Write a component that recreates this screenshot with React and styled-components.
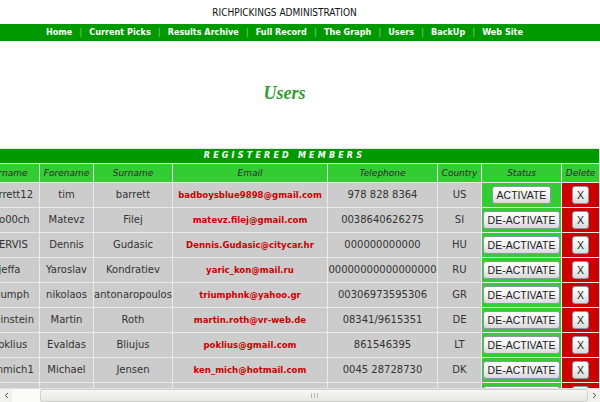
import React, { useLayoutEffect, useRef, useState } from "react";
import styled, { createGlobalStyle } from "styled-components";
import { ChevronLeft, ChevronRight } from "lucide-react";

const GlobalStyle = createGlobalStyle`
  html, body {
    margin: 0;
    padding: 0;
    background: #fff;
    overflow: hidden;
  }
`;

const Frame = styled.div`
  display: flex;
  flex-direction: column;
  height: 100vh;
`;

const Viewport = styled.div`
  flex: 1;
  min-height: 0;
  overflow: hidden;
`;

const Page = styled.div`
  width: max-content;
  min-width: 100%;
  font-family: "DejaVu Sans", Verdana, sans-serif;
`;

const TopTitle = styled.div`
  padding: 6px 0 5px;
  font: 10px/13px "DejaVu Sans Condensed", "DejaVu Sans", sans-serif;
  color: #111;
  text-align: center;
`;

const NavBar = styled.nav`
  height: 17px;
  background: #009900;
  display: flex;
  justify-content: center;
  align-items: center;
`;

const NavLink = styled.a`
  color: #fff;
  font: bold 9px/17px "DejaVu Sans Condensed", "DejaVu Sans", sans-serif;
  text-decoration: none;
`;

const NavSep = styled.span`
  color: #7fd07f;
  margin: 0 7px;
  font: 9px/17px "DejaVu Sans", sans-serif;
`;

const Heading = styled.h1`
  margin: 41px 0 44px;
  text-align: center;
  font: italic bold 18px/22px "Liberation Serif", "Times New Roman", serif;
  color: #339933;
`;

const Table = styled.table`
  width: 630px;
  table-layout: fixed;
  border-collapse: collapse;
  border: 1px solid #e6e6e6;
`;

const Col = styled.col`
  width: ${(p) => p.$w}px;
`;

const TitleCell = styled.th`
  height: 14px;
  padding: 0;
  background: #009900;
  color: #fff;
  font: italic bold 8px/14px "DejaVu Sans", sans-serif;
  letter-spacing: 3.2px;
  text-align: center;
  border: 1px solid #e6e6e6;
`;

const HeadCell = styled.th`
  height: 18px;
  padding: 0;
  background: #33cc33;
  color: #2b2b2b;
  font: italic normal 9px/18px "DejaVu Sans", sans-serif;
  text-align: center;
  border: 1px solid #e6e6e6;
`;

const tones = {
  grey: "#cccccc",
  green: "#33cc33",
  red: "#cc0000",
};

const Cell = styled.td`
  height: 24px;
  padding: 0 0 0 ${(p) => (p.$lead ? 10 : 0)}px;
  background: ${(p) => tones[p.$tone || "grey"]};
  color: #333;
  font: 10px/24px "DejaVu Sans", Verdana, sans-serif;
  text-align: center;
  white-space: nowrap;
  overflow: hidden;
  border: 1px solid #e9e9e9;
`;

const EmailLink = styled.a`
  color: #cc0000;
  font: bold 9.5px "DejaVu Sans Condensed", "DejaVu Sans", sans-serif;
  text-decoration: none;
`;

const ActionButton = styled.button`
  height: 18px;
  min-width: ${(p) => (p.$small ? 17 : 0)}px;
  padding: 0 4px;
  border: 1px solid #8996a8;
  border-radius: 3px;
  background: linear-gradient(#ffffff, #f3f3f3 45%, #d9d9d9);
  color: #1a1a1a;
  font: 10.5px/16px "Liberation Sans", Arial, sans-serif;
  vertical-align: middle;
  cursor: pointer;
`;

const ScrollBar = styled.div`
  height: 13px;
  display: flex;
  background: #f7f7f5;
  border-top: 1px solid #e2e2e2;
`;

const ArrowButton = styled.div`
  width: 12px;
  display: flex;
  align-items: center;
  justify-content: center;
  background: #f1f1ee;
  color: #333;
`;

const Track = styled.div`
  flex: 1;
  display: flex;
  background: #fbfbfa;
`;

const Thumb = styled.div`
  box-sizing: border-box;
  display: flex;
  align-items: center;
  justify-content: center;
  gap: 2px;
  background: linear-gradient(#f7f7f6, #e6e6e3);
  border: 1px solid #cfcfcc;
  border-radius: 2px;
`;

const Grip = styled.span`
  width: 1px;
  height: 5px;
  background: #b8b8b4;
`;

const columns = [
  ["Username", 70],
  ["Forename", 54],
  ["Surname", 79],
  ["Email", 155],
  ["Telephone", 110],
  ["Country", 44],
  ["Status", 80],
  ["Delete", 38],
];

const members = [
  { user: "barrett12", fore: "tim", sur: "barrett", email: "badboysblue9898@gmail.com", tel: "978 828 8364", country: "US", active: false },
  { user: "mo00ch", fore: "Matevz", sur: "Filej", email: "matevz.filej@gmail.com", tel: "0038640626275", country: "SI", active: true },
  { user: "DERVIS", fore: "Dennis", sur: "Gudasic", email: "Dennis.Gudasic@citycar.hr", tel: "000000000000", country: "HU", active: true },
  { user: "jeffa", fore: "Yaroslav", sur: "Kondratiev", email: "yaric_kon@mail.ru", tel: "00000000000000000", country: "RU", active: true },
  { user: "triumph", fore: "nikolaos", sur: "antonaropoulos", email: "triumphnk@yahoo.gr", tel: "00306973595306", country: "GR", active: true },
  { user: "Weinstein", fore: "Martin", sur: "Roth", email: "martin.roth@vr-web.de", tel: "08341/9615351", country: "DE", active: true },
  { user: "poklius", fore: "Evaldas", sur: "Bliujus", email: "poklius@gmail.com", tel: "861546395", country: "LT", active: true },
  { user: "kenmich1", fore: "Michael", sur: "Jensen", email: "ken_mich@hotmail.com", tel: "0045 28728730", country: "DK", active: true },
  { user: "willis77", fore: "Bill", sur: "Willis", email: "billwillis@hotmail.co.uk", tel: "07711 456123", country: "UK", active: true },
  { user: "sanchez", fore: "Pablo", sur: "Sanchez", email: "psanchez@telefonica.es", tel: "0034 915558877", country: "ES", active: true },
];

const navItems = ["Home", "Current Picks", "Results Archive", "Full Record", "The Graph", "Users", "BackUp", "Web Site"];

function App() {
  const viewRef = useRef(null);
  const [bar, setBar] = useState({ left: 0, size: 1 });

  useLayoutEffect(() => {
    const el = viewRef.current;
    if (!el) return;
    el.scrollLeft = el.scrollWidth;
    const total = el.scrollWidth || 1;
    setBar({ left: el.scrollLeft / total, size: el.clientWidth / total });
  }, []);

  return (
    <Frame>
      <GlobalStyle />
      <Viewport ref={viewRef}>
        <Page>
          <TopTitle>RICHPICKINGS ADMINISTRATION</TopTitle>
          <NavBar>
            {navItems.map((item, i) => (
              <React.Fragment key={item}>
                {i > 0 && <NavSep>|</NavSep>}
                <NavLink href="#">{item}</NavLink>
              </React.Fragment>
            ))}
          </NavBar>
          <Heading>Users</Heading>
          <Table>
            <colgroup>
              {columns.map(([name, w]) => (
                <Col key={name} $w={w} />
              ))}
            </colgroup>
            <thead>
              <tr>
                <TitleCell colSpan={8}>REGISTERED MEMBERS</TitleCell>
              </tr>
              <tr>
                {columns.map(([name]) => (
                  <HeadCell key={name}>{name}</HeadCell>
                ))}
              </tr>
            </thead>
            <tbody>
              {members.map((m) => (
                <tr key={m.user}>
                  <Cell $lead>{m.user}</Cell>
                  <Cell>{m.fore}</Cell>
                  <Cell>{m.sur}</Cell>
                  <Cell>
                    <EmailLink href="#">{m.email}</EmailLink>
                  </Cell>
                  <Cell>{m.tel}</Cell>
                  <Cell>{m.country}</Cell>
                  <Cell $tone="green">
                    <ActionButton>{m.active ? "DE-ACTIVATE" : "ACTIVATE"}</ActionButton>
                  </Cell>
                  <Cell $tone="red">
                    <ActionButton $small>X</ActionButton>
                  </Cell>
                </tr>
              ))}
            </tbody>
          </Table>
        </Page>
      </Viewport>
      <ScrollBar>
        <ArrowButton>
          <ChevronLeft size={9} strokeWidth={2.5} />
        </ArrowButton>
        <Track>
          <div style={{ width: `${bar.left * 100}%` }} />
          <Thumb style={{ width: `${bar.size * 100}%` }}>
            <Grip />
            <Grip />
            <Grip />
          </Thumb>
        </Track>
        <ArrowButton>
          <ChevronRight size={9} strokeWidth={2.5} />
        </ArrowButton>
      </ScrollBar>
    </Frame>
  );
}

export default App;
